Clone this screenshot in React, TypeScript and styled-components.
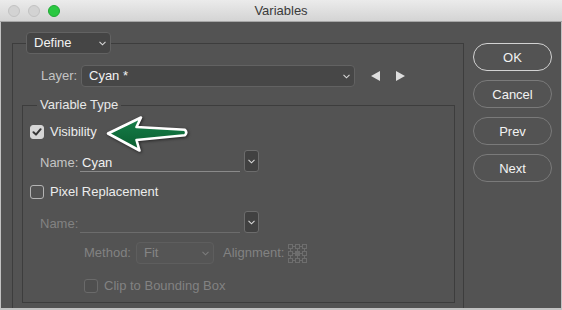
import React from "react";
import styled, { createGlobalStyle } from "styled-components";

const GlobalStyle = createGlobalStyle`
  html, body {
    margin: 0;
    padding: 0;
    background: #535353;
  }
  body {
    font-family: "Liberation Sans", Arial, sans-serif;
    font-size: 13px;
  }
`;

const Window = styled.div`
  width: 562px;
  height: 310px;
  display: flex;
  flex-direction: column;
  overflow: hidden;
  background: #535353;
`;

const TitleBar = styled.div`
  height: 21px;
  flex-shrink: 0;
  display: grid;
  grid-template-columns: 1fr auto 1fr;
  align-items: center;
  background: linear-gradient(#ebebeb, #d4d4d4);
  border-bottom: 1px solid #a6a6a6;
`;

const Lights = styled.div`
  display: flex;
  gap: 8px;
  padding-left: 8px;
`;

const Light = styled.span<{ $color: string; $edge: string }>`
  width: 12px;
  height: 12px;
  box-sizing: border-box;
  border-radius: 50%;
  background: ${(p) => p.$color};
  border: 1px solid ${(p) => p.$edge};
`;

const Title = styled.div`
  color: #3a3a3a;
  font-size: 13px;
  line-height: 21px;
`;

const Body = styled.div`
  flex: 1;
  min-height: 0;
  display: flex;
  align-items: flex-start;
  gap: 9px;
  padding: 10px 0 0 11px;
  border: 1px solid #c2c2c2;
  border-top: none;
  border-bottom-width: 2px;
  overflow: hidden;
`;

const OuterGroup = styled.fieldset`
  margin: 0;
  width: 452px;
  height: 300px;
  flex-shrink: 0;
  box-sizing: border-box;
  min-width: 0;
  border: 1px solid #3d3d3d;
  border-bottom: none;
  padding: 0 8px 0 9px;
`;

const PopupLegend = styled.legend`
  padding: 0;
  margin-left: 4px;
`;

const Select = styled.div<{ $width: number; $disabled?: boolean; $dark?: boolean }>`
  width: ${(p) => p.$width}px;
  height: 22px;
  box-sizing: border-box;
  display: flex;
  align-items: center;
  justify-content: space-between;
  padding: 0 4px 0 7px;
  border: 1px solid ${(p) => (p.$disabled ? "#5e5e5e" : "#626262")};
  border-radius: 4px;
  background: ${(p) => (p.$disabled ? "#555555" : p.$dark ? "#454545" : "#474747")};
  color: ${(p) => (p.$disabled ? "#858585" : "#f2f2f2")};
  font-size: 13px;
  line-height: 20px;
`;

const Chevron = styled.svg<{ $disabled?: boolean }>`
  width: 7px;
  height: 5px;
  fill: none;
  stroke: ${(p) => (p.$disabled ? "#7c7c7c" : "#d8d8d8")};
  stroke-width: 1.1;
`;

const Row = styled.div<{ $top: number; $indent?: number }>`
  display: flex;
  align-items: center;
  margin-top: ${(p) => p.$top}px;
  margin-left: ${(p) => p.$indent ?? 0}px;
  position: relative;
`;

const Label = styled.span<{ $disabled?: boolean; $dim?: boolean }>`
  color: ${(p) => (p.$disabled ? "#828282" : p.$dim ? "#c4c4c4" : "#ececec")};
  font-size: 13px;
  line-height: 16px;
  white-space: nowrap;
`;

const FieldLabel = styled(Label)<{ $width: number; $low?: boolean }>`
  width: ${(p) => p.$width}px;
  flex-shrink: 0;
  padding-top: ${(p) => (p.$low ? 4 : 0)}px;
`;

const NavArrows = styled.div`
  display: flex;
  gap: 16px;
  margin-left: 16px;
`;

const Triangle = styled.svg`
  width: 9px;
  height: 10px;
  fill: #dedede;
`;

const InnerGroup = styled.fieldset`
  margin: 9px 0 0;
  min-width: 0;
  box-sizing: border-box;
  border: 1px solid #3d3d3d;
  padding: 0 7px 8px 7px;
`;

const TextLegend = styled.legend`
  padding: 0 3px;
  margin-left: 7px;
  color: #e8e8e8;
  font-size: 13px;
  line-height: 18px;
`;

const CheckRow = styled(Row)`
  height: 16px;
  gap: 6px;
`;

const Box = styled.span<{ $checked?: boolean; $disabled?: boolean }>`
  width: 14px;
  height: 14px;
  box-sizing: border-box;
  border-radius: 3px;
  display: flex;
  align-items: center;
  justify-content: center;
  background: ${(p) => (p.$checked ? "#d6d6d6" : p.$disabled ? "#4f4f4f" : "transparent")};
  border: 1px solid ${(p) => (p.$checked ? "#d6d6d6" : p.$disabled ? "#6a6a6a" : "#b4b4b4")};
`;

const Check = styled.svg`
  width: 10px;
  height: 10px;
  fill: none;
  stroke: #353535;
  stroke-width: 2;
  stroke-linecap: round;
  stroke-linejoin: round;
`;

const FieldRow = styled(Row)`
  height: 22px;
`;

const LineInput = styled.div<{ $disabled?: boolean }>`
  width: 160px;
  height: 22px;
  box-sizing: border-box;
  border-bottom: 1px solid ${(p) => (p.$disabled ? "#6c6c6c" : "#8a8a8a")};
  padding-left: 2px;
  color: #f0f0f0;
  line-height: 25px;
`;

const MenuButton = styled.div`
  width: 15px;
  height: 22px;
  margin-left: 4px;
  box-sizing: border-box;
  border: 1px solid #6c6c6c;
  border-radius: 3px;
  background: #414141;
  display: flex;
  align-items: center;
  justify-content: center;
`;

const GridIcon = styled.svg`
  width: 19px;
  height: 19px;
  margin-left: 4px;
  fill: none;
  stroke: #6e6e6e;
  stroke-width: 1;
`;

const Pointer = styled.svg`
  position: absolute;
  left: 69px;
  top: -13px;
  width: 95px;
  height: 45px;
  filter: drop-shadow(1px 1.5px 1.5px rgba(0, 0, 0, 0.55));
`;

const ButtonColumn = styled.div`
  display: flex;
  flex-direction: column;
  gap: 9px;
  padding-top: 11px;
`;

const DialogButton = styled.button<{ $default?: boolean }>`
  width: 79px;
  height: 28px;
  box-sizing: border-box;
  border-radius: 14px;
  border: 1px solid ${(p) => (p.$default ? "#d2d2d2" : "#7a7a7a")};
  background: transparent;
  color: #f2f2f2;
  font-family: "Liberation Sans", Arial, sans-serif;
  font-size: 13px;
  padding: 0;
  cursor: pointer;
`;

const ChevronDown: React.FC<{ disabled?: boolean }> = ({ disabled }) => (
  <Chevron $disabled={disabled} viewBox="0 0 7 5">
    <polyline points="0.5,0.8 3.5,3.8 6.5,0.8" />
  </Chevron>
);

const CheckBox: React.FC<{ checked?: boolean; disabled?: boolean }> = ({ checked, disabled }) => (
  <Box $checked={checked} $disabled={disabled}>
    {checked && (
      <Check viewBox="0 0 10 10">
        <polyline points="1.5,5.2 4,7.6 8.6,2.2" />
      </Check>
    )}
  </Box>
);

const AlignmentGrid: React.FC = () => {
  const pos = [0.5, 7.5, 14.5];
  return (
    <GridIcon viewBox="0 0 19 19">
      {pos.map((y) =>
        pos.map((x) => (
          <rect
            key={`${x}-${y}`}
            x={x}
            y={y}
            width={4}
            height={4}
            fill={x === 7.5 && y === 7.5 ? "#6e6e6e" : "none"}
          />
        ))
      )}
      {pos.map((p) => (
        <g key={p}>
          <line x1={4.5} y1={p + 2} x2={7.5} y2={p + 2} />
          <line x1={11.5} y1={p + 2} x2={14.5} y2={p + 2} />
          <line x1={p + 2} y1={4.5} x2={p + 2} y2={7.5} />
          <line x1={p + 2} y1={11.5} x2={p + 2} y2={14.5} />
        </g>
      ))}
    </GridIcon>
  );
};

const App: React.FC = () => {
  return (
    <>
      <GlobalStyle />
      <Window>
        <TitleBar>
          <Lights>
            <Light $color="#d3d3d3" $edge="#c2c2c2" />
            <Light $color="#d3d3d3" $edge="#c2c2c2" />
            <Light $color="#2ac841" $edge="#1fa834" />
          </Lights>
          <Title>Variables</Title>
          <div />
        </TitleBar>
        <Body>
          <OuterGroup>
            <PopupLegend>
              <Select $width={85} $dark>
                Define
                <ChevronDown />
              </Select>
            </PopupLegend>

            <FieldRow $top={11} $indent={19}>
              <FieldLabel $width={40} $dim>
                Layer:
              </FieldLabel>
              <Select $width={274}>
                Cyan *
                <ChevronDown />
              </Select>
              <NavArrows>
                <Triangle viewBox="0 0 9 10">
                  <polygon points="0,5 9,0 9,10" />
                </Triangle>
                <Triangle viewBox="0 0 9 10">
                  <polygon points="0,0 9,5 0,10" />
                </Triangle>
              </NavArrows>
            </FieldRow>

            <InnerGroup>
              <TextLegend>Variable Type</TextLegend>

              <CheckRow $top={10}>
                <CheckBox checked />
                <Label>Visibility</Label>
                <Pointer viewBox="0 0 95 45">
                  <defs>
                    <linearGradient id="arrowFill" x1="0" y1="0" x2="0" y2="1">
                      <stop offset="0" stopColor="#16804a" />
                      <stop offset="1" stopColor="#0a5c2f" />
                    </linearGradient>
                  </defs>
                  <path
                    d="M9 22.5 L42 6.5 L37.5 16 L86 18.8 Q88.5 21.5 86 24.2 L37.5 29 L40.5 39.5 Z"
                    fill="url(#arrowFill)"
                    stroke="#ffffff"
                    strokeWidth={2.6}
                    strokeLinejoin="round"
                  />
                </Pointer>
              </CheckRow>

              <FieldRow $top={10} $indent={10}>
                <FieldLabel $width={40} $dim $low>
                  Name:
                </FieldLabel>
                <LineInput>Cyan</LineInput>
                <MenuButton>
                  <ChevronDown />
                </MenuButton>
              </FieldRow>

              <CheckRow $top={12}>
                <CheckBox />
                <Label>Pixel Replacement</Label>
              </CheckRow>

              <FieldRow $top={11} $indent={10}>
                <FieldLabel $width={40} $disabled $low>
                  Name:
                </FieldLabel>
                <LineInput $disabled />
                <MenuButton>
                  <ChevronDown />
                </MenuButton>
              </FieldRow>

              <FieldRow $top={9} $indent={54}>
                <FieldLabel $width={52} $disabled>
                  Method:
                </FieldLabel>
                <Select $width={78} $disabled>
                  Fit
                  <ChevronDown disabled />
                </Select>
                <Label $disabled style={{ marginLeft: 9 }}>
                  Alignment:
                </Label>
                <AlignmentGrid />
              </FieldRow>

              <CheckRow $top={14} $indent={54}>
                <CheckBox disabled />
                <Label $disabled>Clip to Bounding Box</Label>
              </CheckRow>
            </InnerGroup>
          </OuterGroup>

          <ButtonColumn>
            <DialogButton $default>OK</DialogButton>
            <DialogButton>Cancel</DialogButton>
            <DialogButton>Prev</DialogButton>
            <DialogButton>Next</DialogButton>
          </ButtonColumn>
        </Body>
      </Window>
    </>
  );
};

export default App;
